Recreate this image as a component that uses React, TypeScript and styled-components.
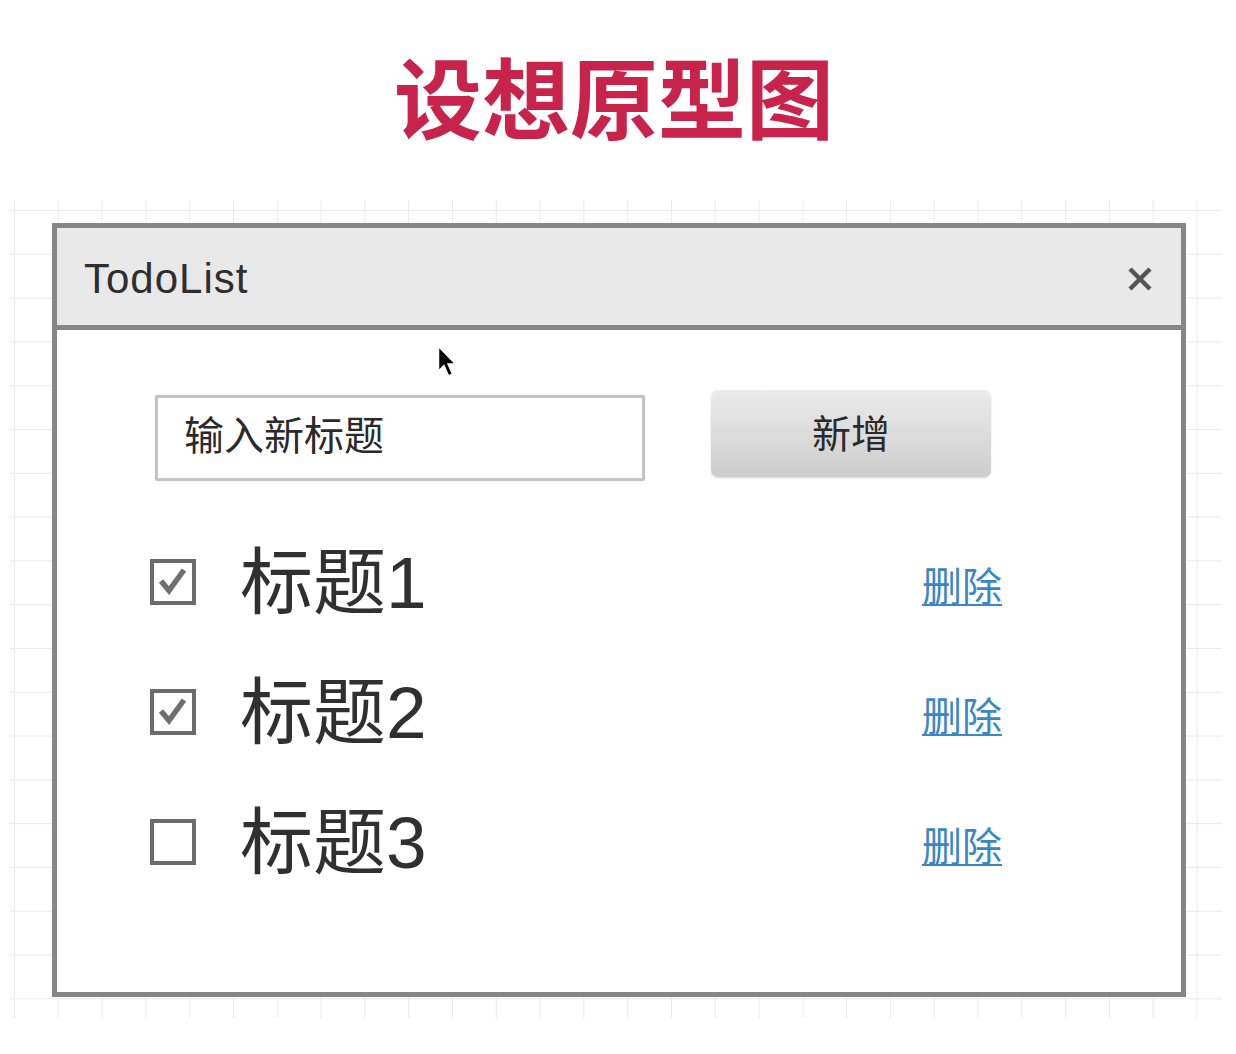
import React from "react";
import styled, { createGlobalStyle } from "styled-components";

const GlobalStyle = createGlobalStyle`
  body {
    margin: 0;
    background: #ffffff;
    font-family: "Liberation Sans", "Noto Sans CJK SC", sans-serif;
  }
`;

const todos = [
  { id: 1, title: "标题1", done: true },
  { id: 2, title: "标题2", done: true },
  { id: 3, title: "标题3", done: false },
];

const App = () => {
  return (
    <Page>
      <GlobalStyle />
      <Heading>设想原型图</Heading>
      <Canvas>
        <Window>
          <TitleBar>
            <span>TodoList</span>
            <CloseIcon viewBox="0 0 26 26">
              <path d="M3 3 L23 23 M23 3 L3 23" />
            </CloseIcon>
          </TitleBar>
          <Body>
            <Form>
              <Input>输入新标题</Input>
              <AddButton>新增</AddButton>
            </Form>
            <List>
              {todos.map((t) => (
                <Row key={t.id}>
                  <Check>
                    {t.done && (
                      <svg viewBox="0 0 38 38" width="38" height="38">
                        <path d="M7 18 L15 27.5 L30 7" />
                      </svg>
                    )}
                  </Check>
                  <Title>{t.title}</Title>
                  <DeleteLink href="#">删除</DeleteLink>
                </Row>
              ))}
            </List>
          </Body>
          <Cursor viewBox="0 0 20 34" width="20" height="34">
            <path d="M1.5 1.5 L1.5 26 L7 20.5 L11.5 31 L15.5 29 L11 19 L18.5 19 Z" />
          </Cursor>
        </Window>
      </Canvas>
    </Page>
  );
};

export default App;

const Page = styled.div`
  width: 1236px;
  height: 1054px;
  display: flex;
  flex-direction: column;
  align-items: center;
  overflow: hidden;
`;

const Heading = styled.h1`
  margin: 42px 8px 0 0;
  height: 158px;
  font-family: "Noto Sans CJK SC", sans-serif;
  font-weight: 700;
  font-size: 88px;
  line-height: 104px;
  color: #c8244b;
  letter-spacing: 0;
  box-sizing: border-box;
`;

const Canvas = styled.div`
  align-self: flex-start;
  margin-left: 10px;
  width: 1212px;
  height: 818px;
  padding: 23px 0 0 42px;
  box-sizing: border-box;
  background-color: #ffffff;
  background-image: linear-gradient(to right, #e9e9e9 1px, transparent 1px),
    linear-gradient(to bottom, #e9e9e9 1px, transparent 1px);
  background-size: 43.8px 43.8px;
  background-position: 4px 10px;
`;

const Window = styled.div`
  position: relative;
  width: 1134px;
  height: 774px;
  box-sizing: border-box;
  border: 5px solid #868686;
  background: #ffffff;
  display: flex;
  flex-direction: column;
`;

const TitleBar = styled.div`
  height: 102px;
  box-sizing: border-box;
  border-bottom: 5px solid #868686;
  background: #e9e9e9;
  display: flex;
  align-items: center;
  justify-content: space-between;
  padding: 4px 28px 0 27px;
  font-size: 42px;
  color: #2e2e2e;
  letter-spacing: 1px;
`;

const CloseIcon = styled.svg`
  width: 26px;
  height: 26px;
  path {
    stroke: #555555;
    stroke-width: 4.5;
    fill: none;
  }
`;

const Body = styled.div`
  padding: 60px 0 0 98px;
`;

const Form = styled.div`
  display: flex;
  align-items: flex-start;
  gap: 66px;
`;

const Input = styled.div`
  margin-top: 5px;
  width: 490px;
  height: 86px;
  box-sizing: border-box;
  border: 3px solid #c4c4c4;
  border-radius: 2px;
  box-shadow: 0 0 2px rgba(0, 0, 0, 0.15);
  display: flex;
  align-items: center;
  padding: 0 0 10px 26px;
  font-family: "Noto Sans CJK SC", sans-serif;
  font-size: 40px;
  color: #2a2a2a;
`;

const AddButton = styled.button`
  width: 280px;
  height: 87px;
  border: none;
  border-radius: 7px;
  background: linear-gradient(to bottom, #ebebeb, #cdcdcd);
  box-shadow: 0 1px 2px rgba(0, 0, 0, 0.15);
  font-family: "Noto Sans CJK SC", sans-serif;
  font-size: 39px;
  color: #2a2a2a;
  padding: 0 0 6px 0;
`;

const List = styled.div`
  margin-top: 36px;
  margin-left: -5px;
  width: 852px;
  display: flex;
  flex-direction: column;
`;

const Row = styled.div`
  height: 130px;
  display: grid;
  grid-template-columns: 46px 1fr auto;
  align-items: center;
  column-gap: 44px;
`;

const Check = styled.div`
  width: 46px;
  height: 46px;
  box-sizing: border-box;
  border: 4px solid #6b6b6b;
  display: flex;
  align-items: center;
  justify-content: center;
  svg path {
    stroke: #6f6f6f;
    stroke-width: 5.5;
    fill: none;
  }
`;

const Title = styled.div`
  font-size: 73px;
  line-height: 1;
  color: #303030;
`;

const DeleteLink = styled.a`
  margin-top: 4px;
  font-family: "Noto Sans CJK SC", sans-serif;
  font-size: 40px;
  color: #3b86c6;
  text-decoration: underline;
  text-decoration-thickness: 2px;
  text-underline-offset: 3px;
`;

const Cursor = styled.svg`
  position: absolute;
  left: 380px;
  top: 117px;
  path {
    fill: #000000;
    stroke: #ffffff;
    stroke-width: 1.5;
  }
`;
